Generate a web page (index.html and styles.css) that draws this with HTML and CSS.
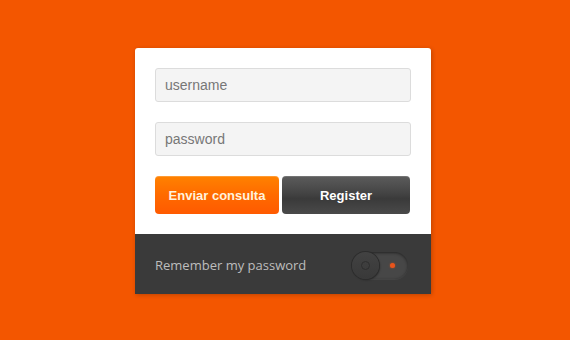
FILE: index.html
```html
<!DOCTYPE html>
<html>
<head>
<meta charset="utf-8">
<link rel="stylesheet" href="styles.css">
</head>
<body>
<div class="card">
  <form class="form">
    <div class="field">username</div>
    <div class="field">password</div>
    <div class="buttons">
      <button type="button" class="btn btn-send">Enviar consulta</button>
      <button type="button" class="btn btn-register">Register</button>
    </div>
  </form>
  <div class="footer">
    <span class="remember">Remember my password</span>
    <span class="toggle"><span class="knob"><span class="knob-ring"></span></span><span class="dot"></span></span>
  </div>
</div>
</body>
</html>
```
FILE: styles.css
```css
html, body {
  margin: 0;
  padding: 0;
}
body {
  background: #f35600;
  width: 570px;
  height: 340px;
  font-family: "Liberation Sans", Arial, sans-serif;
  display: flex;
  justify-content: center;
  padding-top: 48px;
  box-sizing: border-box;
}
.card {
  width: 296px;
  height: 246px;
  background: #fff;
  border-radius: 3px 3px 0 0;
  box-shadow: 1px 1px 4px rgba(0,0,0,0.22);
  display: flex;
  flex-direction: column;
  margin-left: -4px;
}
.form {
  padding: 20px;
  display: flex;
  flex-direction: column;
  gap: 20px;
  margin: 0;
}
.field {
  height: 34px;
  box-sizing: border-box;
  border: 1px solid #dcdcdc;
  border-radius: 3px;
  background: #f4f4f4;
  color: #777;
  font-size: 14px;
  padding-left: 9px;
  line-height: 32px;
}
.buttons {
  display: flex;
  gap: 3px;
  height: 38px;
}
.btn {
  border: none;
  border-radius: 4px;
  font-family: "Liberation Sans", Arial, sans-serif;
  font-weight: bold;
  font-size: 13px;
  padding: 0;
  height: 38px;
}
.btn-send {
  width: 124px;
  color: #fff3dc;
  background: linear-gradient(#ff8200, #ff6a00 50%, #ff5a00);
  box-shadow: inset 0 1px 0 rgba(255,255,255,0.2);
}
.btn-register {
  width: 128px;
  color: #fff;
  background: linear-gradient(#5c5c5c, #444 45%, #3a3a3a 60%, #4a4a4a);
  box-shadow: inset 0 1px 0 rgba(255,255,255,0.15);
}
.footer {
  flex: 1;
  background: #3a3a3a;
  display: flex;
  align-items: center;
  justify-content: space-between;
  padding: 0 23px 0 20px;
}
.remember {
  font-family: "Open Sans", sans-serif;
  font-size: 13px;
  color: #bdbdbd;
  margin-top: 2px;
}
.toggle {
  width: 56px;
  height: 27px;
  border-radius: 14px;
  background: #474747;
  box-shadow: inset 0 1px 3px rgba(0,0,0,0.5), 0 1px 0 rgba(255,255,255,0.05);
  display: flex;
  align-items: center;
  justify-content: space-between;
  padding-right: 13px;
  box-sizing: border-box;
  margin-top: 2px;
}
.knob {
  width: 27px;
  height: 27px;
  border-radius: 50%;
  background: linear-gradient(#424242, #393939);
  box-shadow: 0 0 0 1px #2c2c2c, 1px 1px 2px rgba(0,0,0,0.4);
  display: flex;
  align-items: center;
  justify-content: center;
}
.knob-ring {
  width: 7px;
  height: 7px;
  border-radius: 50%;
  border: 1.5px solid #2e2e2e;
}
.dot {
  width: 5px;
  height: 5px;
  border-radius: 50%;
  background: #e8541c;
  box-shadow: 0 0 2px rgba(255,90,20,0.6);
}
```
